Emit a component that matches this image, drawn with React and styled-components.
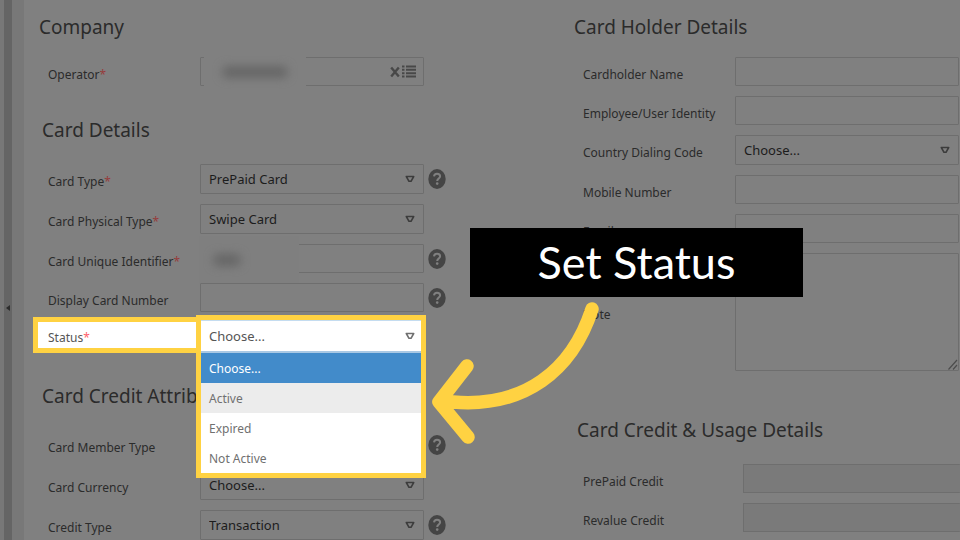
import { useId } from "react";
import styled, { createGlobalStyle, css } from "styled-components";

const GlobalStyle = createGlobalStyle`
  *, *::before, *::after {
    box-sizing: border-box;
  }

  body {
    margin: 0;
    background: #808080;
    color: #2b2b2b;
    font-family: "Noto Sans", "Open Sans", sans-serif;
    font-size: 12px;
  }

  input, select, textarea, button {
    font: inherit;
    color: inherit;
  }
`;

const statusOptions = ["Choose...", "Active", "Expired", "Not Active"];

function Label({ htmlFor, required, lit, children }) {
  return (
    <FieldLabel htmlFor={htmlFor} $lit={lit}>
      {children}
      {required && <Star $lit={lit}>*</Star>}
    </FieldLabel>
  );
}

function HelpButton({ topic }) {
  return (
    <Help type="button" aria-label={`Help: ${topic}`}>
      <svg width="18" height="20" viewBox="0 0 18 20" fill="none">
        <ellipse cx="9" cy="10" rx="8.7" ry="10" fill="#454545" />
        <path
          d="M6 7.4C6.200 5.500 7.400 4.700 9 4.700C10.900 4.700 12.100 5.700 12.100 7.300C12.100 9.500 9.200 9.500 9.200 12"
          stroke="#808080"
          strokeWidth="2"
        />
        <circle cx="9.200" cy="14.600" r="1.300" fill="#808080" />
      </svg>
    </Help>
  );
}

function Arrow({ lit }) {
  return (
    <Caret $lit={lit} width="10" height="8" viewBox="0 0 10 8" fill="none" aria-hidden="true">
      <path d="M1.300 1.500H8.700L6 6.300H4Z" stroke="currentColor" strokeWidth="1.600" strokeLinejoin="round" />
    </Caret>
  );
}

function TextRow({ label, required, help, disabled, redacted }) {
  const id = useId();
  return (
    <Row>
      <Label htmlFor={id} required={required}>{label}</Label>
      <Control $wide={disabled}>
        <Input id={id} disabled={disabled} />
        {redacted && (
          <IdentifierPatch>
            <Smudge $width={28} />
          </IdentifierPatch>
        )}
      </Control>
      {help && <HelpButton topic={label} />}
    </Row>
  );
}

function SelectRow({ label, required, help, value }) {
  const id = useId();
  return (
    <Row>
      <Label htmlFor={id} required={required}>{label}</Label>
      <Control>
        <Select id={id} defaultValue={value}>
          <option>{value}</option>
        </Select>
        <Arrow />
      </Control>
      {help && <HelpButton topic={label} />}
    </Row>
  );
}

function OperatorRow() {
  const id = useId();
  return (
    <Row>
      <Label htmlFor={id} required>Operator</Label>
      <Control>
        <Input id={id} />
        <OperatorPatch>
          <Smudge $width={66} />
        </OperatorPatch>
        <InputActions>
          <IconButton type="button" aria-label="Clear operator">
            <svg width="10" height="12" viewBox="0 0 10 12">
              <path d="M1.200 1.500L8.800 10.500M8.800 1.500L1.200 10.500" stroke="currentColor" strokeWidth="2.400" />
            </svg>
          </IconButton>
          <IconButton type="button" aria-label="Choose operator">
            <svg width="14" height="13" viewBox="0 0 14 13">
              <path
                d="M0 1.500H2.500M0 4.800H2.500M0 8.200H2.500M0 11.500H2.500M4 1.500H14M4 4.800H14M4 8.200H14M4 11.500H14"
                stroke="currentColor"
                strokeWidth="2"
              />
            </svg>
          </IconButton>
        </InputActions>
      </Control>
    </Row>
  );
}

function StatusRow() {
  const id = useId();
  return (
    <Row>
      <Label htmlFor={id} required lit>Status</Label>
      <StatusControl>
        <StatusPicker>
          <PickerHead>
            <Select id={id} defaultValue={statusOptions[0]} $bare>
              {statusOptions.map((option) => (
                <option key={option}>{option}</option>
              ))}
            </Select>
            <Arrow lit />
          </PickerHead>
          <Options role="listbox" aria-label="Status">
            {statusOptions.map((option, index) => (
              <Option key={option} role="option" aria-selected={index === 0} $hovered={index === 1}>
                {option}
              </Option>
            ))}
          </Options>
        </StatusPicker>
      </StatusControl>
    </Row>
  );
}

function NoteRow() {
  const id = useId();
  return (
    <Row>
      <Label htmlFor={id}>Note</Label>
      <Control>
        <TextArea id={id} />
        <Grip width="10" height="11" viewBox="0 0 10 11" aria-hidden="true">
          <path d="M0.500 10.500L9 1M5 10.500L9 6" stroke="#4c4c4c" strokeWidth="1.200" />
        </Grip>
      </Control>
    </Row>
  );
}

export default function App() {
  return (
    <Page>
      <GlobalStyle />
      <Rail>
        <Collapse type="button" aria-label="Collapse panel">
          <svg width="4" height="6" viewBox="0 0 4 6">
            <path d="M4 0V6L0 3Z" fill="#2c2c2c" />
          </svg>
        </Collapse>
      </Rail>
      <Columns>
        <Column>
          <Section>
            <Title $flush>Company</Title>
            <OperatorRow />
          </Section>
          <Section>
            <Title>Card Details</Title>
            <SelectRow label="Card Type" value="PrePaid Card" required help />
            <SelectRow label="Card Physical Type" value="Swipe Card" required />
            <TextRow label="Card Unique Identifier" required help redacted />
            <TextRow label="Display Card Number" help />
            <StatusRow />
          </Section>
          <Section>
            <Title>Card Credit Attributes</Title>
            <SelectRow label="Card Member Type" value="Choose..." help />
            <SelectRow label="Card Currency" value="Choose..." />
            <SelectRow label="Credit Type" value="Transaction" help />
          </Section>
        </Column>
        <Column>
          <Section $spaced>
            <Title $flush>Card Holder Details</Title>
            <TextRow label="Cardholder Name" />
            <TextRow label="Employee/User Identity" />
            <SelectRow label="Country Dialing Code" value="Choose..." />
            <TextRow label="Mobile Number" />
            <TextRow label="Email" />
            <NoteRow />
          </Section>
          <Section>
            <Title>Card Credit &amp; Usage Details</Title>
            <TextRow label="PrePaid Credit" disabled />
            <TextRow label="Revalue Credit" disabled />
          </Section>
        </Column>
      </Columns>
      <Banner>Set Status</Banner>
      <Pointer width="180" height="150" viewBox="0 0 180 150" fill="none" aria-hidden="true">
        <path
          d="M162 13C142 75 94 112 23 106M37 70L9 106L38 141"
          stroke="#ffd242"
          strokeWidth="13.500"
          strokeLinecap="round"
          strokeLinejoin="round"
        />
      </Pointer>
    </Page>
  );
}

const Page = styled.div`
  position: relative;
  display: flex;
  height: 100vh;
  overflow: hidden;
`;

const Rail = styled.aside`
  flex: none;
  display: flex;
  width: 24px;
  padding-left: 4px;
  background: #787878;
`;

const Collapse = styled.button`
  display: flex;
  align-items: center;
  justify-content: center;
  width: 8px;
  padding: 76px 0 0;
  border: 0;
  background: #656565;
`;

const Columns = styled.main`
  flex: 1;
  display: grid;
  grid-template-columns: 535fr 386fr;
  align-items: start;
  padding: 13px 0 0 15px;
`;

const Column = styled.div`
  min-width: 0;
`;

const Section = styled.section`
  display: flex;
  flex-direction: column;
  gap: 10px;
  padding-bottom: ${(props) => (props.$spaced ? "45px" : "30px")};
`;

const Title = styled.h2`
  margin: 0;
  padding-left: ${(props) => (props.$flush ? "0" : "3px")};
  padding-bottom: ${(props) => (props.$flush ? "6px" : "10px")};
  font-size: 19px;
  line-height: 28px;
  font-weight: 400;
  white-space: nowrap;
`;

const Row = styled.div`
  display: flex;
  align-items: center;
  padding-left: 9px;
`;

const FieldLabel = styled.label`
  flex: none;
  width: 152px;
  padding-top: 6px;
  line-height: 20px;
  white-space: nowrap;

  ${(props) =>
    props.$lit &&
    css`
      width: 158px;
      height: 26px;
      margin: 0 4px 4px -10px;
      padding: 6px 0 0 10px;
      background: #ffffff;
      box-shadow: 0 0 0 5px #ffd242;
      color: #555555;
    `}
`;

const Star = styled.span`
  color: ${(props) => (props.$lit ? "#ff5f6a" : "#963c3c")};
`;

const Control = styled.div`
  position: relative;
  flex: ${(props) => (props.$wide ? "1" : "0 1 224px")};
  min-width: 0;
  margin-left: ${(props) => (props.$wide ? "8px" : "0")};
`;

const fieldBox = css`
  display: block;
  width: 100%;
  border: 1px solid #6e6e6e;
  border-radius: 1px;
  background: transparent;
  outline: 0;
`;

const Input = styled.input`
  ${fieldBox}
  height: 29px;
  padding: 0 8px;

  &:disabled {
    background: #7a7a7a;
    border-right: 0;
  }
`;

const Select = styled.select`
  ${fieldBox}
  height: 30px;
  padding: 0 24px 0 8px;
  appearance: none;
  color: #1c1c1c;
  font-size: 13px;

  ${(props) =>
    props.$bare &&
    css`
      border: 0;
      color: #555555;
    `}
`;

const TextArea = styled.textarea`
  ${fieldBox}
  height: 118px;
  padding: 6px 8px;
  resize: none;
`;

const Caret = styled.svg`
  position: absolute;
  top: 11px;
  right: ${(props) => (props.$lit ? "6px" : "9px")};
  color: ${(props) => (props.$lit ? "#707070" : "#3c3c3c")};
  pointer-events: none;
`;

const Grip = styled.svg`
  position: absolute;
  right: 1px;
  bottom: 1px;
`;

const Help = styled.button`
  flex: none;
  display: flex;
  margin-left: 4px;
  padding: 0;
  border: 0;
  background: none;
`;

const InputActions = styled.div`
  position: absolute;
  top: 8px;
  right: 8px;
  display: flex;
  align-items: center;
  gap: 2px;
`;

const IconButton = styled.button`
  display: flex;
  padding: 0;
  border: 0;
  background: none;
  color: #484848;
`;

const OperatorPatch = styled.div`
  position: absolute;
  top: -5px;
  left: 4px;
  display: flex;
  align-items: center;
  justify-content: center;
  width: 102px;
  height: 40px;
  background: #808080;
`;

const IdentifierPatch = styled.div`
  position: absolute;
  top: -8px;
  left: -1px;
  display: flex;
  align-items: center;
  width: 100px;
  height: 48px;
  padding-left: 14px;
  background: #7f7f7f;
`;

const Smudge = styled.span`
  width: ${(props) => props.$width}px;
  height: 12px;
  border-radius: 6px;
  background: #666666;
  filter: blur(5px);
`;

const StatusControl = styled.div`
  position: relative;
  flex: 0 1 224px;
  height: 30px;
`;

const StatusPicker = styled.div`
  position: absolute;
  z-index: 1;
  top: -7px;
  left: -4px;
  width: 230px;
  border: 5px solid #ffd242;
  background: #ffffff;
  color: #707070;
`;

const PickerHead = styled.div`
  position: relative;
  border-top: 1px solid #c4dcf0;
  border-bottom: 2px solid #a9c8e4;
`;

const Options = styled.ul`
  margin: 0;
  padding: 0;
  list-style: none;
`;

const Option = styled.li`
  height: 30px;
  padding-left: 8px;
  line-height: 31px;
  background: ${(props) => (props.$hovered ? "#ececec" : "#ffffff")};

  &[aria-selected="true"] {
    background: #428bca;
    color: #ffffff;
  }
`;

const Banner = styled.div`
  position: absolute;
  z-index: 2;
  top: 228px;
  left: 470px;
  width: 333px;
  height: 69px;
  background: #000000;
  color: #ffffff;
  font-family: Lato, sans-serif;
  font-size: 45px;
  line-height: 68px;
  text-align: center;
`;

const Pointer = styled.svg`
  position: absolute;
  z-index: 2;
  top: 296px;
  left: 430px;
  pointer-events: none;
`;
